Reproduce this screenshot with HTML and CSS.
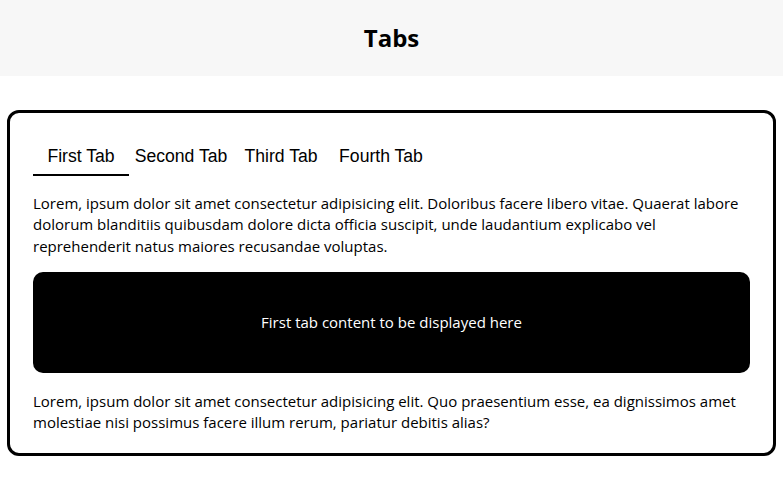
FILE: index.html
```html
<!DOCTYPE html>
<html lang="en">
<head>
<meta charset="utf-8">
<title>Tabs</title>
<link rel="stylesheet" href="styles.css">
</head>
<body>
<header class="page-header">
  <h1 class="page-title">Tabs</h1>
</header>
<main class="card">
  <nav class="tabs">
    <button class="tab active">First Tab</button>
    <button class="tab">Second Tab</button>
    <button class="tab">Third Tab</button>
    <button class="tab">Fourth Tab</button>
  </nav>
  <p class="text">Lorem, ipsum dolor sit amet consectetur adipisicing elit. Doloribus facere libero vitae. Quaerat labore dolorum blanditiis quibusdam dolore dicta officia suscipit, unde laudantium explicabo vel reprehenderit natus maiores recusandae voluptas.</p>
  <div class="panel">First tab content to be displayed here</div>
  <p class="text text-last">Lorem, ipsum dolor sit amet consectetur adipisicing elit. Quo praesentium esse, ea dignissimos amet molestiae nisi possimus facere illum rerum, pariatur debitis alias?</p>
</main>
</body>
</html>
```
FILE: styles.css
```css
* { box-sizing: border-box; }
body {
  margin: 0;
  font-family: "Open Sans", "Noto Sans", sans-serif;
  font-size: 15px;
  color: #000;
  background: #fff;
}
.page-header {
  height: 76px;
  background: #f7f7f7;
  display: flex;
  align-items: center;
  justify-content: center;
}
.page-title {
  margin: 0;
  font-size: 24px;
  font-weight: 700;
  line-height: 1;
}
.card {
  margin: 34px 7px 0;
  border: 3px solid #000;
  border-radius: 12px;
  padding: 26px 23px 20px;
}
.tabs {
  display: flex;
  gap: 4px;
}
.tab {
  width: 96px;
  padding: 7px 0 8px;
  border: 0;
  border-bottom: 2px solid transparent;
  background: transparent;
  font-family: "Liberation Sans", Arial, sans-serif;
  font-size: 17.6px;
  line-height: 20px;
  color: #000;
  text-align: center;
  white-space: nowrap;
}
.tab.active {
  border-bottom-color: #000;
}
.text {
  margin: 17px 0 15px;
  line-height: 21.3px;
}
.text-last {
  margin: 18px 0 0;
}
.panel {
  background: #000;
  color: #fff;
  border-radius: 10px;
  padding: 40px 16px;
  text-align: center;
  line-height: 21px;
}
```
